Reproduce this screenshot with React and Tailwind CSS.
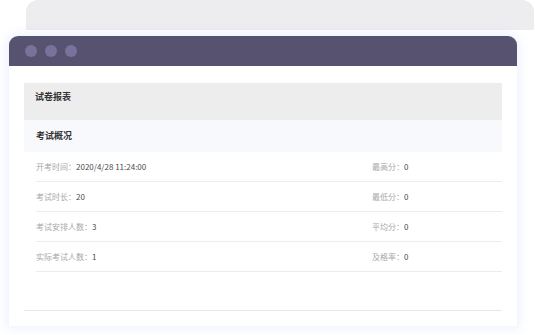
import React from 'react'

const rows = [
  { left: '开考时间：', leftVal: '2020/4/28 11:24:00', right: '最高分：', rightVal: '0' },
  { left: '考试时长：', leftVal: '20', right: '最低分：', rightVal: '0' },
  { left: '考试安排人数：', leftVal: '3', right: '平均分：', rightVal: '0' },
  { left: '实际考试人数：', leftVal: '1', right: '及格率：', rightVal: '0' },
]

const App = () => {
  return (
    <div
      className="w-[535px] h-[335px] bg-white overflow-hidden flex flex-col"
      style={{ fontFamily: '"Noto Sans CJK SC", "Noto Sans", sans-serif' }}
    >
      {/* card stacked behind */}
      <div className="ml-[26px] w-[508px] h-[30px] shrink-0 rounded-t-[12px] bg-[#ededef]" />

      {/* window */}
      <div className="ml-[9px] mt-[6px] w-[508px] h-[290px] shrink-0 bg-white rounded-t-[9px] shadow-[0_0_10px_3px_rgba(120,160,255,0.13)] flex flex-col">
        <div className="h-[30px] shrink-0 rounded-t-[9px] bg-[#57526f] flex items-center gap-[8px] pl-[16px]">
          <span className="w-[12px] h-[12px] rounded-full bg-[#77739a]" />
          <span className="w-[12px] h-[12px] rounded-full bg-[#77739a]" />
          <span className="w-[12px] h-[12px] rounded-full bg-[#77739a]" />
        </div>

        <div className="flex-1 flex flex-col px-[15px] pt-[17px]">
          <div className="h-[37px] shrink-0 bg-[#ededed] pl-[11px] pt-[8px] leading-[12px] text-[9px] font-bold text-[#333]">
            试卷报表
          </div>
          <div className="h-[32px] shrink-0 bg-[#f7f9fd] flex items-center pl-[12px] text-[9px] font-bold text-[#333]">
            考试概况
          </div>
          <div className="ml-[12px] flex flex-col">
            {rows.map((r) => (
              <div
                key={r.left}
                className="h-[30px] flex items-center border-b border-[#ececec] text-[8px]"
              >
                <div className="w-[336px]">
                  <span className="text-[#a8a8a8]">{r.left}</span>
                  <span className="text-[#4a4a4a]">{r.leftVal}</span>
                </div>
                <div>
                  <span className="text-[#a8a8a8]">{r.right}</span>
                  <span className="text-[#4a4a4a]">{r.rightVal}</span>
                </div>
              </div>
            ))}
          </div>
          <div className="mt-[38px] h-[1px] bg-[#e6e6e6]" />
        </div>
      </div>
    </div>
  )
}

export default App
